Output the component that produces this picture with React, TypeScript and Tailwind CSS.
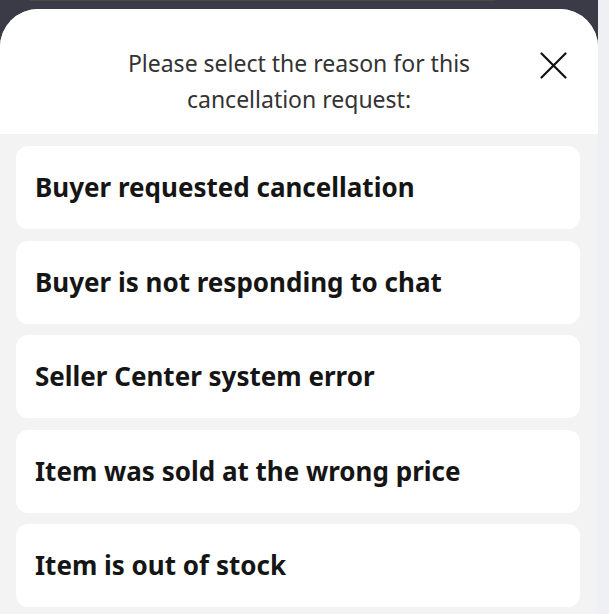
import React from "react";

const reasons = [
  "Buyer requested cancellation",
  "Buyer is not responding to chat",
  "Seller Center system error",
  "Item was sold at the wrong price",
  "Item is out of stock",
];

export default function App() {
  return (
    <div
      className="flex h-[614px] w-[609px] overflow-hidden"
      style={{ fontFamily: '"Noto Sans", "Open Sans", sans-serif' }}
    >
      <div className="flex w-[598px] flex-col bg-[#3b3a47]">
        <div className="ml-[30px] h-px w-[465px] bg-[#4a4a45]" />
        <div className="mt-[8px] flex flex-1 flex-col overflow-hidden rounded-t-[38px] bg-[#f3f3f3]">
          <div className="relative flex h-[125px] shrink-0 justify-center bg-white pt-[36px]">
            <p className="w-[380px] text-center text-[23px] leading-[36px] text-[#333333]">
              Please select the reason for this cancellation request:
            </p>
            <button className="absolute right-[31px] top-[43px] text-[#111111]" aria-label="Close">
              <svg width="27" height="27" viewBox="0 0 27 27" fill="none" stroke="currentColor" strokeWidth="2.2" strokeLinecap="round">
                <path d="M1.5 1.5L25.5 25.5M25.5 1.5L1.5 25.5" />
              </svg>
            </button>
          </div>
          <div className="flex flex-col gap-[11.5px] pl-[16px] pr-[18px] pt-[12px]">
            {reasons.map((r) => (
              <div
                key={r}
                className="flex h-[83px] items-center rounded-[12px] bg-white px-[19px] text-[26px] font-bold text-[#151515]"
              >
                {r}
              </div>
            ))}
          </div>
        </div>
      </div>
      <div className="w-[11px] bg-[#eef0f4]" />
    </div>
  );
}
